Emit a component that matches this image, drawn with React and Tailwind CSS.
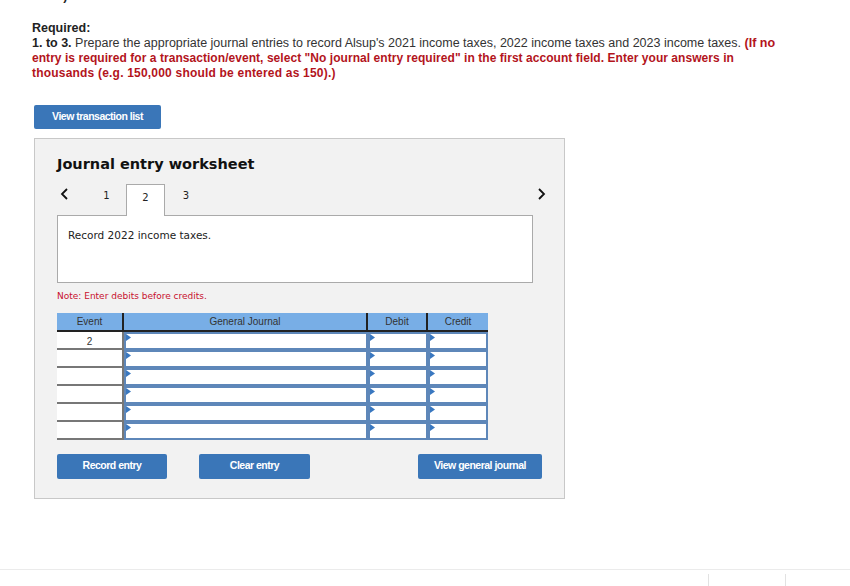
const rows = ["2", "", "", "", "", ""];

function Marker() {
  return (
    <svg className="absolute left-0 top-0" width="5" height="7" viewBox="0 0 5 7">
      <path d="M0 0 L5 3.5 L0 7 Z" fill="#3a78c0" />
    </svg>
  );
}

function Chevron({ dir }) {
  const d = dir === "left" ? "M7 1 L2 6 L7 11" : "M2 1 L7 6 L2 11";
  return (
    <svg width="9" height="12" viewBox="0 0 9 12">
      <path d={d} fill="none" stroke="#111" strokeWidth="1.8" />
    </svg>
  );
}

function InputCell({ w }) {
  return (
    <div className={`relative h-[18px] ${w} border-2 border-[#5e87b9] bg-white`}>
      <Marker />
    </div>
  );
}

function BlueButton({ children, w }) {
  return (
    <div className={`${w} h-[25px] flex items-center justify-center rounded-[2px] bg-[#3a76b8] text-white text-[10.5px] font-bold tracking-[-0.5px] font-['Liberation_Sans',Arial,sans-serif]`}>
      {children}
    </div>
  );
}

function Instructions() {
  return (
    <div className="px-[32px] text-[12.5px] leading-[15px] font-['Liberation_Sans',Arial,sans-serif] text-[#333] whitespace-nowrap">
      <div className="h-[4px] overflow-hidden relative">
        <p className="absolute -top-[11px] left-[0px] font-bold text-[#222]">2023.)</p>
      </div>
      <p className="mt-[17px] font-bold text-[#222]">Required:</p>
      <p>
        <span className="font-bold text-[#222]">1. to 3.</span> Prepare the appropriate journal entries to record Alsup's 2021 income taxes, 2022 income taxes and 2023 income taxes.{" "}
        <span className="font-bold text-[#b3141c]">(If no</span>
      </p>
      <p className="font-bold text-[#b3141c] text-[12px] tracking-[0.05px]">
        entry is required for a transaction/event, select "No journal entry required" in the first account field. Enter your answers in
      </p>
      <p className="font-bold text-[#b3141c] text-[12px] tracking-[0.2px]">
        thousands (e.g. 150,000 should be entered as 150).)
      </p>
    </div>
  );
}

function JournalTable() {
  return (
    <div className="mt-[9px] w-[431px] font-['Liberation_Sans',Arial,sans-serif]">
      <div className="flex h-[19px] bg-[#78aee6] border-b-2 border-[#222] text-[10px] text-[#333]">
        <div className="w-[67px] flex items-center justify-center border-r-2 border-[#222]">Event</div>
        <div className="w-[244px] flex items-center justify-center border-r-2 border-[#222]">General Journal</div>
        <div className="w-[60px] flex items-center justify-center border-r-2 border-[#222]">Debit</div>
        <div className="w-[60px] flex items-center justify-center">Credit</div>
      </div>
      {rows.map((ev, i) => (
        <div key={i} className="flex h-[18px]">
          <div className="w-[67px] h-[18px] bg-white border-b-2 border-r-2 border-[#777] flex items-start justify-center pt-[2px] text-[10px] text-[#333]">
            {ev}
          </div>
          <InputCell w="w-[244px]" />
          <InputCell w="w-[60px]" />
          <InputCell w="w-[60px]" />
        </div>
      ))}
    </div>
  );
}

function Worksheet() {
  return (
    <div className="ml-[34px] mt-[9px] w-[531px] h-[361px] border border-[#c8c8c8] bg-[#f2f2f2] px-[22px] pt-[14px]">
      <h2 className="text-[14.5px] leading-[22px] font-bold text-[#111] font-['DejaVu_Sans',Verdana,sans-serif]">
        Journal entry worksheet
      </h2>
      <div className="mt-[8px] flex items-end h-[32px] relative">
        <span className="w-[30px] pl-[3px] pb-[15px] flex"><Chevron dir="left" /></span>
        <span className="w-[39px] pb-[12px] text-center text-[10px] text-[#222] font-['DejaVu_Sans',sans-serif]">1</span>
        <div className="w-[39px] h-[32px] border border-b-0 border-[#aaa] bg-white relative z-10 -mb-px flex items-start pt-[5px] justify-center text-[10px] text-[#222] font-['DejaVu_Sans',sans-serif]">
          2
        </div>
        <span className="w-[42px] pb-[12px] text-center text-[10px] text-[#222] font-['DejaVu_Sans',sans-serif]">3</span>
        <span className="ml-auto mr-[-4px] pb-[15px] flex"><Chevron dir="right" /></span>
      </div>
      <div className="w-[476px] h-[68px] border border-[#aaa] bg-white px-[10px] pt-[12px] text-[10.5px] text-[#222] font-['DejaVu_Sans',Verdana,sans-serif]">
        Record 2022 income taxes.
      </div>
      <p className="mt-[7px] text-[9px] text-[#c8102e] font-['DejaVu_Sans',Verdana,sans-serif]">Note: Enter debits before credits.</p>
      <JournalTable />
      <div className="mt-[14px] flex">
        <BlueButton w="w-[110px]">Record entry</BlueButton>
        <div className="ml-[32px]">
          <BlueButton w="w-[111px]">Clear entry</BlueButton>
        </div>
        <div className="ml-[108px]">
          <BlueButton w="w-[124px]">View general journal</BlueButton>
        </div>
      </div>
    </div>
  );
}

export default function App() {
  return (
    <div className="w-[850px] h-[586px] bg-white relative overflow-hidden">
      <Instructions />
      <div className="ml-[34px] mt-[24px] w-[127px] h-[24px] flex items-center justify-center rounded-[2px] bg-[#3a76b8] text-white text-[10.5px] font-bold tracking-[-0.5px] font-['Liberation_Sans',Arial,sans-serif]">
        View transaction list
      </div>
      <Worksheet />
      <div className="mt-[70px] border-t border-[#ebebeb] h-[18px] flex">
        <div className="ml-[708px] mt-[4px] w-px h-[14px] bg-[#e2e2e2]" />
        <div className="ml-[76px] mt-[4px] w-px h-[14px] bg-[#e2e2e2]" />
      </div>
    </div>
  );
}
